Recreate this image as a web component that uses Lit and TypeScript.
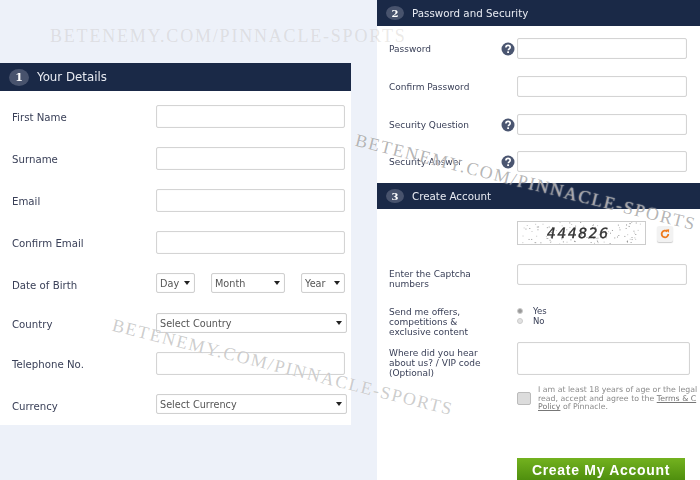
import { LitElement, html, css, svg } from "lit";
import { customElement } from "lit/decorators.js";

const help = html`<svg class="help" viewBox="0 0 14 14" aria-hidden="true"><circle cx="7" cy="7" r="6.5" fill="#4a5570"/><path d="M4.9 5.4c0-1.3 1-2 2.2-2s2.1.7 2.1 1.8c0 1.6-1.9 1.6-1.9 3" fill="none" stroke="#fff" stroke-width="1.6"/><rect x="6.2" y="9.3" width="1.8" height="1.7" fill="#fff"/></svg>`;

let seed = 7;
const rnd = () => (seed = (seed * 16807) % 2147483647) / 2147483647;
const dots = Array.from({ length: 120 }, () => svg`<rect x=${(rnd() * 129).toFixed(1)} y=${(rnd() * 24).toFixed(1)} width="1" height="1" fill=${rnd() > 0.5 ? "#888" : "#bbb"}/>`);

@customElement("app-root")
export class AppRoot extends LitElement {
  static styles = css`
    :host { display: block; width: 700px; height: 480px; overflow: hidden; position: relative; background: #edf1f9; font-family: "DejaVu Sans", Verdana, sans-serif; font-size: 10.2px; color: #3a4058; }
    * { box-sizing: border-box; }
    .page { display: flex; align-items: flex-start; gap: 26px; height: 480px; filter: blur(0.5px); }
    .panel { background: #fff; overflow: hidden; }
    .left { width: 351px; height: 362px; margin-top: 63px; }
    .right { width: 323px; height: 480px; font-size: 9px; }
    .head { height: 28px; background: #1a2947; color: #e8ebf2; display: flex; align-items: center; gap: 8px; padding-left: 9px; font-size: 11.8px; }
    .right .head { height: 26px; font-size: 10.3px; }
    .num { width: 20px; height: 17px; border-radius: 50%; background: #48536d; color: #fff; display: flex; align-items: center; justify-content: center; font: bold 11px "DejaVu Serif", serif; }
    .right .num { width: 18px; height: 14px; font-size: 10px; }
    .body { display: flex; flex-direction: column; }
    .left .body { padding: 14px 0 0 12px; }
    .right .body { padding: 12px 0 0 12px; }
    .row { display: flex; align-items: flex-start; }
    .label { flex: none; display: flex; justify-content: space-between; }
    .left .label { width: 144px; padding-top: 7px; }
    .left .label.up { padding-top: 6px; }
    .right .label { width: 128px; padding: 6px 2px 0 0; line-height: 10px; }
    .right .label.two { padding-top: 5px; }
    .right .label.offers { padding-top: 1px; }
    .right .label.hear { padding-top: 6px; }
    .right .label.sp { display: block; }
    .field { height: 23px; border: 1px solid #d4d4d4; border-radius: 2px; background: #fff; box-shadow: inset 0 0 1px #ddd; }
    .left .field { width: 189px; }
    .right .field { width: 170px; height: 21px; }
    .h42 { height: 42px; } .h40 { height: 40px; } .h39 { height: 39px; }
    .h38 { height: 38px; } .h37 { height: 37px; } .h32 { height: 32px; }
    .sel { height: 20px; border: 1px solid #d0d0d0; border-radius: 2px; background: #fff; display: flex; align-items: center; justify-content: space-between; padding: 0 4px 0 3px; color: #555; font-size: 9.7px; box-shadow: inset 0 0 1px #ddd; }
    .sel::after { content: ""; border: 3px solid transparent; border-top: 4px solid #222; border-bottom: 0; }
    .dob { display: flex; justify-content: space-between; width: 189px; }
    .day { width: 39px; } .month { width: 74px; } .year { width: 44px; }
    .wide { width: 191px; }
    .help { width: 14px; height: 14px; margin-top: -2px; flex: none; }
    .captcha { width: 129px; height: 24px; border: 1px solid #ccc; position: relative; background: #fff; }
    .captcha svg { position: absolute; inset: 0; width: 100%; height: 100%; }
    .code { position: absolute; left: 29px; top: 3px; font: 14px "DejaVu Sans", sans-serif; letter-spacing: 1.5px; color: #333; -webkit-text-stroke: 0.4px #333; transform: skewX(-10deg); }
    .refresh { width: 16px; height: 16px; margin: 5px 0 0 11px; background: #f2f2f2; border-radius: 2px; display: flex; align-items: center; justify-content: center; box-shadow: 0 1px 1px #ccc; }
    .refresh svg { width: 10px; height: 10px; }
    .h43 { height: 43px; } .h36 { height: 36px; } .h50 { height: 50px; } .h66 { height: 66px; }
    .radios { display: flex; flex-direction: column; gap: 1px; font-size: 8.5px; padding-top: 1px; line-height: 8.5px; }
    .radio { display: flex; align-items: center; gap: 10px; }
    .dot { width: 6px; height: 6px; border-radius: 50%; background: #e2e2e2; border: 1px solid #ccc; }
    .dot.on { background: #999; }
    .right .area { width: 173px; height: 33px; }
    .check { width: 14px; height: 13px; background: #dcdcdc; border: 1px solid #bbb; border-radius: 2px; flex: none; }
    .legal { margin: -6px 0 0 7px; font-size: 7.8px; line-height: 8.7px; color: #8a8a8a; white-space: nowrap; }
    .legal u { color: #777; }
    .btn { margin-left: 140px; width: 168px; height: 22px; background: linear-gradient(#73b21f, #4f8f0e); color: #fff; display: flex; align-items: center; justify-content: center; font: bold 14px "Liberation Sans", Arial, sans-serif; letter-spacing: 0.7px; padding-top: 1px; }
    .mark { position: absolute; white-space: nowrap; font: 18px "Liberation Serif", serif; letter-spacing: 1.6px; color: rgba(110,110,110,0.35); text-shadow: 0 0 1px #fff; pointer-events: none; transform-origin: 0 0; }
    .m1 { left: 50px; top: 26px; letter-spacing: 1.8px; color: rgba(170,160,150,0.24); text-shadow: none; }
    .m2 { left: 115px; top: 315px; transform: rotate(14deg); }
    .m3 { left: 358px; top: 130px; transform: rotate(14deg); color: rgba(90,90,90,0.45); }
  `;

  private textRow(label: string, h = "h42") {
    return html`<div class="row ${h}"><div class="label">${label}</div><div class="field"></div></div>`;
  }

  private secRow(label: string, q: boolean, h: string) {
    return html`<div class="row ${h}"><div class="label"><span>${label}</span>${q ? help : ""}</div><div class="field"></div></div>`;
  }

  render() {
    return html`
      <div class="page">
        <section class="panel left">
          <div class="head"><span class="num">1</span>Your Details</div>
          <div class="body">
            ${this.textRow("First Name")}
            ${this.textRow("Surname")}
            ${this.textRow("Email")}
            ${this.textRow("Confirm Email")}
            <div class="row h40"><div class="label">Date of Birth</div>
              <div class="dob"><div class="sel day">Day</div><div class="sel month">Month</div><div class="sel year">Year</div></div>
            </div>
            <div class="row h39"><div class="label up">Country</div><div class="sel wide">Select Country</div></div>
            ${this.textRow("Telephone No.")}
            <div class="row"><div class="label">Currency</div><div class="sel wide">Select Currency</div></div>
          </div>
        </section>
        <section class="panel right">
          <div class="head"><span class="num">2</span>Password and Security</div>
          <div class="body">
            ${this.secRow("Password", true, "h38")}
            ${this.secRow("Confirm Password", false, "h38")}
            ${this.secRow("Security Question", true, "h37")}
            ${this.secRow("Security Answer", true, "h32")}
          </div>
          <div class="head"><span class="num">3</span>Create Account</div>
          <div class="body">
            <div class="row h43"><div class="label"></div>
              <div class="captcha"><svg viewBox="0 0 129 24">${dots}</svg><span class="code">444826</span></div>
              <div class="refresh"><svg viewBox="0 0 12 12"><path d="M10 6a4 4 0 1 1-1.3-3" fill="none" stroke="#ee7a1c" stroke-width="2.2"/><path d="M7 1l4-.6-.4 4z" fill="#ee7a1c"/></svg></div>
            </div>
            <div class="row h42"><div class="label sp two">Enter the Captcha<br />numbers</div><div class="field"></div></div>
            <div class="row h36"><div class="label sp offers">Send me offers,<br />competitions &amp;<br />exclusive content</div>
              <div class="radios"><div class="radio"><span class="dot on"></span>Yes</div><div class="radio"><span class="dot"></span>No</div></div>
            </div>
            <div class="row h50"><div class="label sp hear">Where did you hear<br />about us? / VIP code<br />(Optional)</div><div class="field area"></div></div>
            <div class="row h66"><div class="label"></div><span class="check"></span>
              <div class="legal">I am at least 18 years of age or the legal<br />read, accept and agree to the <u>Terms &amp; C</u><br /><u>Policy</u> of Pinnacle.</div>
            </div>
          </div>
          <div class="btn">Create My Account</div>
        </section>
      </div>
      <div class="mark m1">BETENEMY.COM/PINNACLE-SPORTS</div>
      <div class="mark m2">BETENEMY.COM/PINNACLE-SPORTS</div>
      <div class="mark m3">BETENEMY.COM/PINNACLE-SPORTS</div>
    `;
  }
}
